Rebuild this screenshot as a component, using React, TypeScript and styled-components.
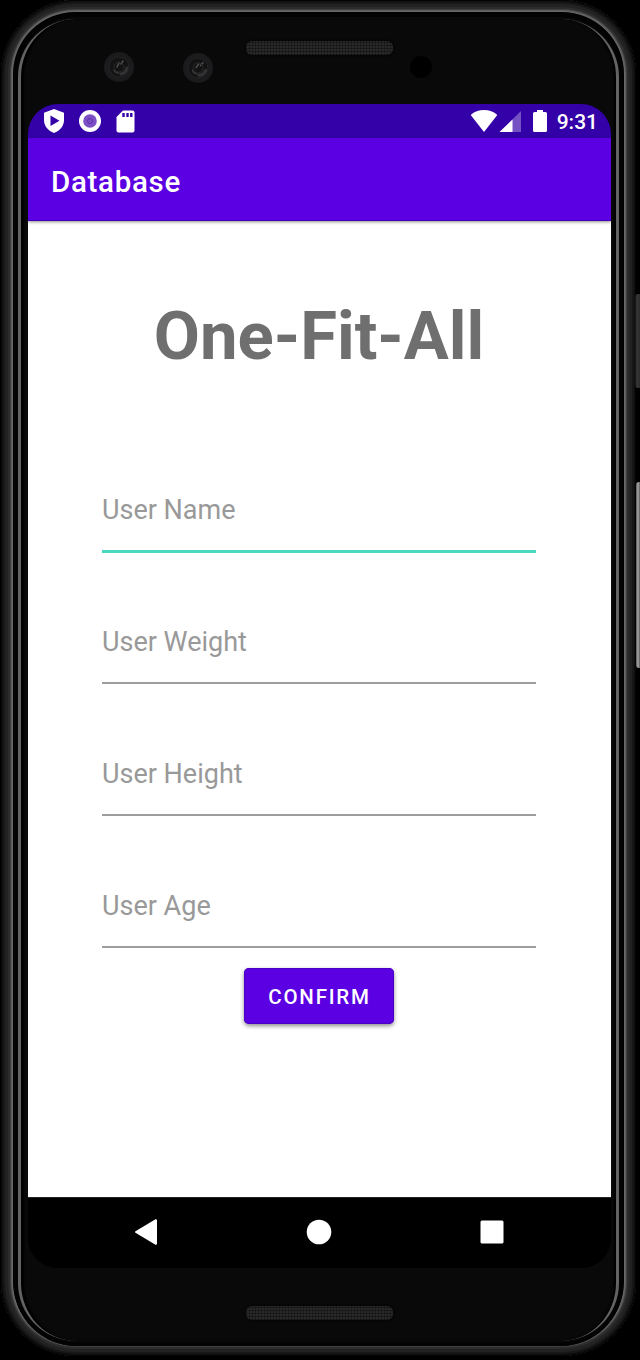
import React from "react";
import styled, { createGlobalStyle } from "styled-components";

const GlobalStyle = createGlobalStyle`
  * { box-sizing: border-box; }
  html, body { margin: 0; background: #000; }
  body { font-family: Roboto, "Liberation Sans", sans-serif; overflow: hidden; }
`;

const Stage = styled.div`
  position: relative;
  width: 640px;
  height: 1360px;
  padding: 0 4px 4px 1px;
  background: #000;
  overflow: hidden;
`;

const SideKey = styled.div<{ $top: number; $height: number; $bright?: boolean }>`
  position: absolute;
  right: 0;
  top: ${(p) => p.$top}px;
  width: ${(p) => (p.$bright ? 4 : 5)}px;
  height: ${(p) => p.$height}px;
  border-radius: 3px 0 0 3px;
  background: ${(p) =>
    p.$bright
      ? "linear-gradient(90deg, #555, #aaa 50%, #555)"
      : "linear-gradient(90deg, #111, #383838 40%, #2a2a2a)"};
`;

const Shell = styled.div`
  height: 1356px;
  padding: 13px 13px 10px;
  border-radius: 74px;
  background: #000;
  box-shadow:
    inset 0 0 0 1px #050505,
    inset 0 0 0 2px #0e0e0e,
    inset 0 0 0 4px #171717,
    inset 0 0 0 7px #222,
    inset 0 0 0 9px #2c2c2c,
    inset 0 0 0 10px #404040,
    inset 0 0 0 11px #5c5c5c,
    inset 0 0 0 12px #686868;
`;

const Gap = styled.div`
  height: 100%;
  padding: 6px 4px 5px;
  border-radius: 62px;
  background: #090909;
  box-shadow: inset 0 0 0 4px #030303;
`;

const Face = styled.div`
  display: flex;
  flex-direction: column;
  align-items: center;
  height: 100%;
  padding-left: 2px;
  border: solid #636363;
  border-width: 0 3px;
  border-radius: 58px;
  background: #090909;
  box-shadow: inset 4px 0 2px -1px #000, inset -3px 0 2px -1px #000;
`;

const TopBezel = styled.div`
  position: relative;
  flex: none;
  width: 583px;
  height: 85px;
`;

const BottomBezel = styled.div`
  flex: none;
  display: flex;
  justify-content: center;
  width: 583px;
  padding-top: 38px;
`;

const Grille = styled.div`
  width: 147px;
  height: 14px;
  border-radius: 6px;
  background:
    repeating-linear-gradient(90deg, rgba(0, 0, 0, 0.3) 0 1px, transparent 1px 3px),
    repeating-linear-gradient(0deg, #1b1b1b 0 1px, #292929 1px 3px);
  box-shadow: 0 0 3px #000;
`;

const TopGrille = styled(Grille)`
  margin: 22px auto 0;
`;

const Lens = styled.svg<{ $x: number; $y: number }>`
  position: absolute;
  left: ${(p) => p.$x}px;
  top: ${(p) => p.$y}px;
`;

const Sensor = styled.div`
  position: absolute;
  left: 382px;
  top: 37px;
  width: 22px;
  height: 22px;
  border-radius: 50%;
  background: #000;
`;

const Screen = styled.div`
  flex: none;
  display: flex;
  flex-direction: column;
  width: 583px;
  height: 1164px;
  border-radius: 30px;
  background: #000;
  overflow: hidden;
`;

const StatusBar = styled.header`
  display: flex;
  flex: none;
  justify-content: space-between;
  height: 34px;
  padding: 0 13px 0 16px;
  background: #3400a8;
  color: #fff;
`;

const StatusGroup = styled.div`
  display: flex;
  align-items: center;
  height: 34px;
`;

const Clock = styled.span`
  font-size: 21px;
  font-weight: 500;
  line-height: 34px;
  margin: 2px 0 0 9px;
`;

const AppBar = styled.div`
  position: relative;
  flex: none;
  height: 83px;
  padding: 2px 23px 0;
  background: #5a00e2;
  color: #fff;
  font-size: 29.5px;
  font-weight: 500;
  letter-spacing: 0.7px;
  line-height: 84px;
  box-shadow: inset 0 -1px #4500b8, 0 1px 3px rgba(0, 0, 0, 0.45);
`;

const Content = styled.main`
  display: flex;
  flex: 1;
  flex-direction: column;
  align-items: center;
  padding: 75px 1px 0 0;
  background: #fff;
`;

const Title = styled.h1`
  margin: 0 0 82px;
  color: #6f6f6f;
  font-size: 67px;
  font-weight: 700;
  line-height: 80px;
  white-space: nowrap;
`;

const Field = styled.label<{ $active?: boolean }>`
  display: block;
  width: 434px;
  height: ${(p) => (p.$active ? 95 : 94)}px;
  margin-bottom: ${(p) => (p.$active ? 37 : 38)}px;
  padding-top: 36.5px;
  border-bottom: ${(p) => (p.$active ? "3px solid #4ad9bf" : "2px solid #9e9e9e")};
  color: #999;
  font-size: 27px;
  line-height: 30px;
`;

const ConfirmButton = styled.button`
  width: 150px;
  height: 56px;
  margin-top: -18px;
  padding: 2px 0 0 1px;
  border: 0;
  border-radius: 5px;
  background: #5a00e2;
  box-shadow: inset 0 0 0 1px #4a00c4, 0 2px 4px rgba(0, 0, 0, 0.45);
  color: #fff;
  font-family: inherit;
  font-size: 20.5px;
  font-weight: 500;
  letter-spacing: 1.8px;
  line-height: 54px;
`;

const NavBar = styled.nav`
  display: flex;
  flex: none;
  align-items: center;
  justify-content: space-between;
  height: 71px;
  padding: 0 107px 2px 106px;
  background: #000;
  border-top: 1px solid #222;
`;

const ShieldIcon = () => (
  <svg width="22" height="26" viewBox="0 0 22 26">
    <path d="M11 1L21 4.7V12C21 18 16.8 22.8 11 25C5.2 22.8 1 18 1 12V4.7Z" fill="#fff" />
    <path d="M7.5 7.5L16.5 12.7L7.5 18Z" fill="#3400a8" />
  </svg>
);

const DiscIcon = () => (
  <svg width="24" height="24" viewBox="0 0 24 24">
    <circle cx="12" cy="12" r="11" fill="#fff" />
    <circle cx="12" cy="12" r="6.8" fill="#7c4fc4" />
    <circle cx="12" cy="12" r="2.5" fill="none" stroke="#6030b0" />
  </svg>
);

const SdIcon = () => (
  <svg width="19" height="23" viewBox="0 0 19 23">
    <path d="M7 0.5H16.5Q18.5 0.5 18.5 2.5V20.5Q18.5 22.5 16.5 22.5H2.5Q0.5 22.5 0.5 20.5V7Z" fill="#fff" />
    <path d="M7.5 3V7M11.5 3V7M15.3 3V7" stroke="#3400a8" strokeWidth="2.4" />
  </svg>
);

const WifiIcon = () => (
  <svg width="28" height="24" viewBox="0 0 28 24">
    <path d="M14 23L0.7 6Q6 1 14 1T27.3 6Z" fill="#fff" />
  </svg>
);

const SignalIcon = () => (
  <svg width="23" height="23" viewBox="0 0 23 23">
    <path d="M22 1V22H0.5Z" fill="#fff" fillOpacity="0.32" />
    <path d="M13.5 9.5V22H0.5Z" fill="#fff" />
  </svg>
);

const BatteryIcon = () => (
  <svg width="16" height="24" viewBox="0 0 16 24">
    <path d="M5 1H11V3H13.5Q15 3 15 4.5V21.5Q15 23 13.5 23H2.5Q1 23 1 21.5V4.5Q1 3 2.5 3H5Z" fill="#fff" />
  </svg>
);

const CameraLens = ({ x, y, tilt }: { x: number; y: number; tilt: number }) => (
  <Lens $x={x} $y={y} width="32" height="32" viewBox="0 0 32 32">
    <circle cx="16" cy="16" r="15" fill="#1b1b1d" />
    <circle cx="16" cy="16" r="10" fill="#131313" stroke="#242424" />
    <g transform={`rotate(${tilt} 16 16)`} fill="none" strokeLinecap="round">
      <path d="M14 16L16 12M18 13L20 10" stroke="#555" strokeWidth="1.4" />
      <path d="M11 19Q12 22 16 22" stroke="#3a3a3a" strokeWidth="1.4" />
      <path d="M18 23Q23 22 24 17" stroke="#333" strokeWidth="3" />
      <circle cx="16" cy="16" r="5" stroke="#282828" />
    </g>
  </Lens>
);

const Signals = styled(StatusGroup)`
  & > svg:nth-child(2) { margin-left: 1px; }
  & > svg:nth-child(3) { margin-left: 10px; }
`;

const Notices = styled(StatusGroup)`
  margin-left: -1px;
  & > svg:nth-child(2) { margin-left: 13px; }
  & > svg:nth-child(3) { margin-left: 14px; }
`;

const fields = ["User Name", "User Weight", "User Height", "User Age"];

export default function App() {
  return (
    <>
      <GlobalStyle />
      <Stage>
        <SideKey $top={294} $height={94} />
        <SideKey $top={482} $height={186} $bright />
        <Shell>
          <Gap>
            <Face>
              <TopBezel>
                <TopGrille />
                <CameraLens x={75} y={32} tilt={0} />
                <CameraLens x={154} y={33} tilt={10} />
                <Sensor />
              </TopBezel>
              <Screen>
                <StatusBar>
                  <Notices>
                    <ShieldIcon />
                    <DiscIcon />
                    <SdIcon />
                  </Notices>
                  <Signals>
                    <WifiIcon />
                    <SignalIcon />
                    <BatteryIcon />
                    <Clock>9:31</Clock>
                  </Signals>
                </StatusBar>
                <AppBar>Database</AppBar>
                <Content>
                  <Title>One-Fit-All</Title>
                  {fields.map((name, i) => (
                    <Field key={name} $active={i === 0}>
                      {name}
                    </Field>
                  ))}
                  <ConfirmButton>CONFIRM</ConfirmButton>
                </Content>
                <NavBar>
                  <svg width="24" height="28" viewBox="0 0 24 28">
                    <path d="M2 14L22 2.2V25.8Z" fill="#fff" stroke="#fff" strokeWidth="2" strokeLinejoin="round" />
                  </svg>
                  <svg width="26" height="26" viewBox="0 0 26 26">
                    <circle cx="13" cy="13" r="12.3" fill="#fff" />
                  </svg>
                  <svg width="24" height="24" viewBox="0 0 24 24">
                    <rect x="0.5" y="0.5" width="23" height="23" rx="1.5" fill="#fff" />
                  </svg>
                </NavBar>
              </Screen>
              <BottomBezel>
                <Grille />
              </BottomBezel>
            </Face>
          </Gap>
        </Shell>
      </Stage>
    </>
  );
}
